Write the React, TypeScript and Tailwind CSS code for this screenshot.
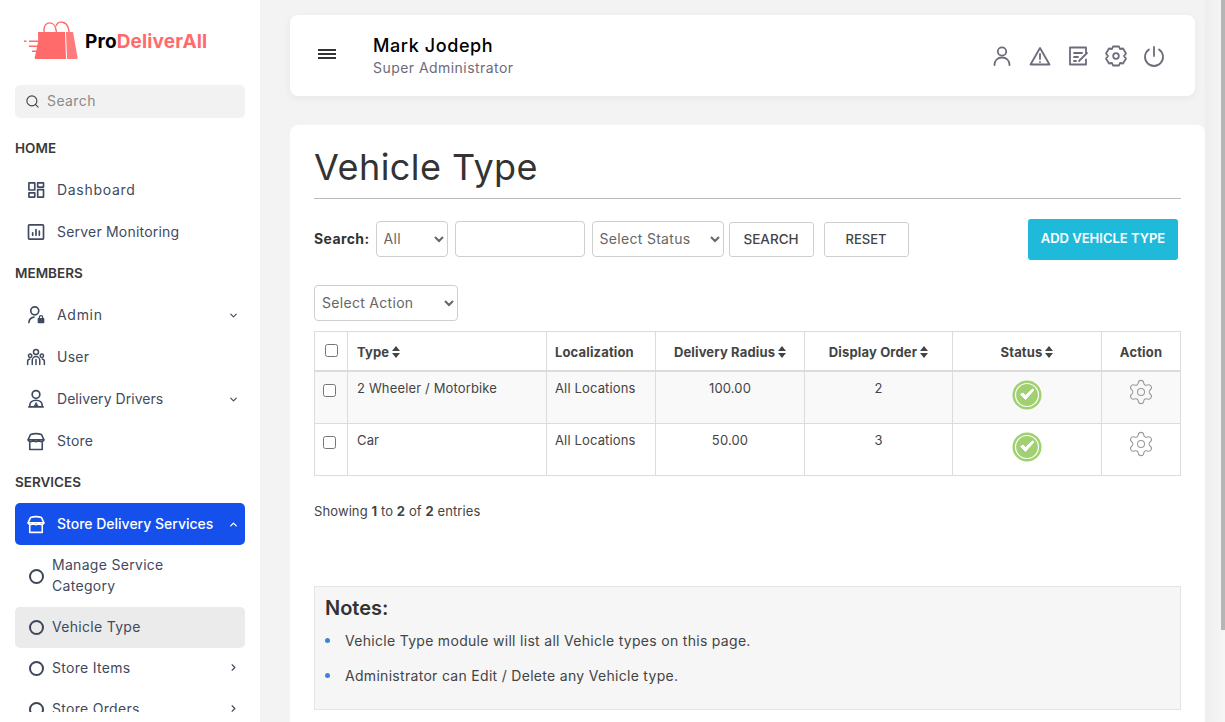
import React from "react";
import { Search, ChevronDown, ChevronUp, ChevronRight, Settings } from "lucide-react";

const Ic = ({ children, size = 20, sw = 1.6, cls = "" }: { children: React.ReactNode; size?: number; sw?: number; cls?: string }) => (
  <svg width={size} height={size} viewBox="0 0 24 24" fill="none" stroke="currentColor" strokeWidth={sw} strokeLinecap="round" strokeLinejoin="round" className={cls}>{children}</svg>
);

const DashIcon = () => (
  <Ic sw={2}><rect x="3.500" y="3.500" width="7" height="8.500" /><rect x="14" y="3.500" width="7" height="5" /><rect x="3.500" y="15.500" width="7" height="5" /><rect x="14" y="11.500" width="7" height="9" /></Ic>
);
const MonitorIcon = () => (
  <Ic sw={2}><rect x="3" y="3.500" width="18" height="17" rx="1" /><path d="M8 16v-3M12 16V9M16 16v-5" /></Ic>
);
const AdminIcon = () => (
  <svg width="20" height="20" viewBox="0 0 24 24" fill="none" stroke="currentColor" strokeWidth="2" strokeLinecap="round">
    <circle cx="10.500" cy="7" r="4.800" />
    <path d="M3.500 21c.3-3.500 2.500-6 6-6.500" />
    <rect x="14" y="15.500" width="8" height="6.500" rx="1" fill="currentColor" stroke="none" />
    <path d="M16 16v-1.200a2 2 0 0 1 4 0V16" strokeWidth="1.500" />
  </svg>
);
const UserIcon = () => (
  <Ic sw={1.800}><circle cx="12" cy="6" r="3" /><circle cx="5" cy="10.500" r="2" /><circle cx="19" cy="10.500" r="2" /><path d="M7.500 21v-5a4.500 4.500 0 0 1 9 0v5M2 21v-3.500a3 3 0 0 1 2.500-3M22 21v-3.500a3 3 0 0 0-2.500-3M12 15v6" /></Ic>
);
const DriverIcon = () => (
  <svg width="20" height="20" viewBox="0 0 24 24" fill="none" stroke="currentColor" strokeWidth="2" strokeLinecap="round" strokeLinejoin="round">
    <circle cx="12" cy="6.500" r="4.600" />
    <path d="M4.500 20c0-4 3.300-6.500 7.500-6.500s7.500 2.500 7.500 6.500" />
    <path d="M3.500 21.500h17" />
    <path d="M12 16.500l-2 4h4z" fill="currentColor" strokeWidth="1" />
  </svg>
);
const StoreIcon = ({ size = 23 }: { size?: number }) => (
  <Ic size={size} sw={1.900}>
    <path d="M5.500 3.500c2-.7 4-1 6.500-1s4.500.3 6.500 1L21.500 10H2.500z" />
    <path d="M2.500 10c1.500 3 4.500 3 6.300.3 1.500 2.500 4.900 2.500 6.400 0 1.800 2.700 4.800 2.700 6.300-.3" />
    <path d="M4.500 13.500v8h15v-8" />
  </Ic>
);

const Radio = () => <span className="w-[15px] h-[15px] rounded-full border-2 border-[#3d4759] shrink-0" />;

const Section = ({ children }: { children: React.ReactNode }) => (
  <div className="h-[41px] flex items-center text-[13.500px] font-semibold text-[#3a3a3a]"><span>{children}</span></div>
);

const NavItem = ({ icon, label, chev, track = "tracking-[0.25px]" }: { icon: React.ReactNode; label: string; chev?: boolean; track?: string }) => (
  <div className={`h-[42px] flex items-center pl-[11px] pr-[6px] text-[14px] text-[#3f4a60] ${track}`}>
    <span className="w-[20px] h-[20px] flex items-center justify-center text-[#3f4a60]">{icon}</span>
    <span className="ml-[11px] flex-1 -mt-[2px]">{label}</span>
    {chev && <ChevronDown size={11} strokeWidth={2.500} className="text-[#3f4a60]" />}
  </div>
);

const SubItem = ({ label, chev }: { label: string; chev?: boolean }) => (
  <div className="h-[41px] flex items-center pl-[14px] pr-[6px] text-[14px] text-[#3f4a60] tracking-[0.3px]">
    <Radio />
    <span className="ml-[8px] flex-1 -mt-[2px]">{label}</span>
    {chev && <ChevronRight size={11} strokeWidth={2.500} className="-mt-[2px]" />}
  </div>
);

const Sidebar = () => (
  <aside className="w-[260px] shrink-0 bg-white h-[722px] px-[15px]">
    <div className="h-[85px] flex items-start pt-[21px] pl-[8px]">
      <svg width="56" height="40" viewBox="0 0 56 40" className="shrink-0">
        <path d="M21 11V9c0-9.500 11-9.500 12 0l.5 2M33 5c2-6 11-5 12.500 3l.7 3" fill="none" stroke="#ff6b6b" strokeWidth="1.400" />
        <path d="M15 11h27l1 27H13c-1 0-1.500-.7-1.300-1.500L13 31H9v-1.500h4.300L14 26H6v-1.500h8.300l.7-3.500H6v-1.500h9.200z" fill="#ff6b6b" />
        <path d="M43 11h7l4.500 25c.2 1-.5 2-1.500 2h-9z" fill="#ff7b7b" />
        <path d="M1 20.200h2.500" stroke="#ff6b6b" strokeWidth="1.500" />
      </svg>
      <span className="ml-[6px] mt-[10px] text-[19px] leading-[22px] font-bold text-black tracking-[0.15px]">Pro<span className="text-[#ff6b6b]">DeliverAll</span></span>
    </div>
    <div className="h-[33px] rounded-[5px] bg-[#f2f2f2] flex items-center pl-[10px] text-[14px] text-[#8a8a8a] tracking-[0.4px]">
      <Search size={15} strokeWidth={1.800} className="text-[#444]" />
      <span className="ml-[7px] -mt-[2px]">Search</span>
    </div>
    <div className="h-[594px] overflow-hidden">
      <div className="h-[10px]" />
      <Section>HOME</Section>
      <NavItem icon={<DashIcon />} label="Dashboard" track="tracking-[0.7px]" />
      <NavItem icon={<MonitorIcon />} label="Server Monitoring" track="tracking-[0.2px]" />
      <Section>MEMBERS</Section>
      <NavItem icon={<AdminIcon />} label="Admin" chev track="tracking-[0.7px]" />
      <NavItem icon={<UserIcon />} label="User" />
      <NavItem icon={<DriverIcon />} label="Delivery Drivers" chev track="tracking-[0.05px]" />
      <NavItem icon={<StoreIcon />} label="Store" />
      <Section>SERVICES</Section>
      <div className="h-[42px] rounded-[5px] bg-[#1650ec] text-white flex items-center pl-[11px] pr-[6px] text-[14px] font-medium">
        <span className="w-[20px] h-[20px] flex items-center justify-center"><StoreIcon /></span>
        <span className="ml-[11px] flex-1 -mt-[2px]">Store Delivery Services</span>
        <ChevronUp size={11} strokeWidth={3} />
      </div>
      <div className="h-[62px] flex items-center pl-[14px] text-[14px] leading-[21px] text-[#3f4a60] tracking-[0.3px]">
        <Radio />
        <span className="ml-[8px] -mt-[2px]">Manage Service<br />Category</span>
      </div>
      <div className="rounded-[5px] bg-[#ebebeb]"><SubItem label="Vehicle Type" /></div>
      <SubItem label="Store Items" chev />
      <SubItem label="Store Orders" chev />
    </div>
  </aside>
);

const selectCls = "h-[36px] border border-[#cfcfcf] rounded-[4px] bg-white text-[14px] text-[#666] tracking-[0.3px] pl-[3px] pb-[2px]";

const Sort = () => (
  <svg width="8" height="12" viewBox="0 0 8 12" className="inline-block ml-[3px] align-[-1px]" fill="#444"><path d="M4 0l4 5H0zM4 12L0 7h8z" /></svg>
);

const StatusIcon = () => (
  <svg width="30" height="30" viewBox="0 0 30 30" className="mx-auto">
    <circle cx="15" cy="15" r="14.500" fill="#a0d070" />
    <circle cx="15" cy="15" r="11.500" fill="none" stroke="#fff" strokeWidth="1.200" />
    <path d="M8.500 14.500l5 5 8.500-9.500-1.500-1-7 6.500-2.500-2.500z" fill="#fff" stroke="#fff" strokeWidth="1" strokeLinejoin="round" />
  </svg>
);

const th = "border border-[#dcdcdc] border-b-2 text-[13px] font-bold text-[#444] px-[8px] pt-[4px] align-middle tracking-[0.15px]";
const td = "border border-[#dcdcdc] text-[13px] text-[#444] px-[8px] pt-[7px] align-top tracking-[0.15px]";

const Row = ({ name, radius, order, shade }: { name: string; radius: string; order: string; shade?: boolean }) => (
  <tr className={shade ? "h-[53px] bg-[#f9f9f9]" : "h-[52px] bg-white"}>
    <td className="border border-[#dcdcdc] pl-[8px] pt-[12px] align-top"><input type="checkbox" className="block w-[13px] h-[13px]" /></td>
    <td className={`${td} pl-[9px]`}>{name}</td>
    <td className={td}>All Locations</td>
    <td className={`${td} text-center`}>{radius}</td>
    <td className={`${td} text-center`}>{order}</td>
    <td className="border border-[#dcdcdc] pt-[8px] align-top"><StatusIcon /></td>
    <td className="border border-[#dcdcdc] pt-[6px] align-top"><Settings size={28} strokeWidth={0.9} className="mx-auto text-[#999999]" /></td>
  </tr>
);

const HeaderIcons = () => (
  <div className="flex items-center gap-[14px] text-[#6e6b7b]">
    <Ic size={24} sw={1.800}><circle cx="12" cy="7.500" r="4.200" /><path d="M4.500 21c0-4.500 3-7.500 7.500-7.500s7.500 3 7.500 7.500" /></Ic>
    <Ic size={24} sw={1.800}><path d="M12 4L2.500 20.500h19z" /><path d="M12 10v5M12 17.800v.2" /></Ic>
    <Ic size={24} sw={1.800}><path d="M20 9V3.500H4v17h16v-5" /><path d="M8 9h8M8 13h4M8 17h2" /><path d="M13 17l8-8" /></Ic>
    <Ic size={24} sw={1.800}><path d="M9 3h6l1 2.500 3-.5 3 5-2 2.500 2 2.500-3 5-3-.5-1 2.500H9l-1-2.500-3 .5-3-5 2-2.500-2-2.500 3-5 3 .5z" transform="translate(0 -.5)" /><circle cx="12" cy="12" r="2.800" /></Ic>
    <Ic size={24} sw={1.800}><path d="M12 3v9" /><path d="M7 5.500a9 9 0 1 0 10 0" /></Ic>
  </div>
);

const Main = () => (
  <main className="flex-1 min-w-0 pl-[30px] pt-[15px] overflow-hidden">
    <header className="w-[905px] h-[81px] bg-white rounded-[8px] shadow-[0_2px_8px_rgba(0,0,0,0.05)] flex items-center pl-[28px] pr-[29px]">
      <div className="flex flex-col gap-[2px] w-[16px] -mt-[3px]">
        <span className="h-[2px] w-[18px] bg-[#333]" /><span className="h-[2px] w-[18px] bg-[#333]" /><span className="h-[2px] w-[18px] bg-[#333]" />
      </div>
      <div className="ml-[39px] flex-1">
        <div className="text-[18px] leading-[26px] font-medium text-[#000] tracking-[0.6px]">Mark Jodeph</div>
        <div className="text-[14px] leading-[20px] text-[#6e6b7b] tracking-[0.45px] -mt-[1px]">Super Administrator</div>
      </div>
      <HeaderIcons />
    </header>
    <section className="mt-[29px] w-[915px] h-[600px] bg-white rounded-t-[8px] px-[24px] pt-[21px]">
      <h1 className="text-[36px] leading-[42px] font-normal text-[#333] h-[53px] border-b border-[#bbb] w-[867px] tracking-[0.45px]">Vehicle Type</h1>
      <div className="mt-[19px] h-[42px] flex items-center w-[864px]">
        <label className="text-[14px] font-bold text-[#333] mr-[6px] tracking-[0.4px] -mt-[2px]">Search:</label>
        <select className={`${selectCls} w-[72px]`}><option>All</option></select>
        <input className="ml-[7px] w-[130px] h-[36px] border border-[#cfcfcf] rounded-[4px] bg-white" />
        <select className={`${selectCls} ml-[7px] w-[132px]`}><option>Select Status</option></select>
        <button className="ml-[5px] w-[85px] h-[35px] border border-[#cfcfcf] rounded-[3px] text-[13.500px] font-medium text-[#444] bg-white">SEARCH</button>
        <button className="ml-[10px] w-[85px] h-[35px] border border-[#cfcfcf] rounded-[3px] pt-[1px] text-[13px] font-medium text-[#444] bg-white">RESET</button>
        <button className="ml-auto w-[150px] h-[41px] rounded-[3px] bg-[#1fbad9] text-white text-[13px] font-semibold">ADD VEHICLE TYPE</button>
      </div>
      <div className="mt-[25px]">
        <select className={`${selectCls} w-[144px]`}><option>Select Action</option></select>
      </div>
      <table className="mt-[10px] w-[866px] table-fixed border-collapse">
        <colgroup>
          <col className="w-[33px]" /><col className="w-[199px]" /><col className="w-[109px]" /><col className="w-[149px]" /><col className="w-[148px]" /><col className="w-[149px]" /><col className="w-[79px]" />
        </colgroup>
        <thead>
          <tr className="h-[39px]">
            <th className={th}><input type="checkbox" className="block mx-auto w-[13px] h-[13px] -mt-[4px]" /></th>
            <th className={`${th} text-left pl-[9px]`}>Type<Sort /></th>
            <th className={`${th} text-left`}>Localization</th>
            <th className={th}>Delivery Radius<Sort /></th>
            <th className={th}>Display Order<Sort /></th>
            <th className={th}>Status<Sort /></th>
            <th className={th}>Action</th>
          </tr>
        </thead>
        <tbody>
          <Row name="2 Wheeler / Motorbike" radius="100.00" order="2" shade />
          <Row name="Car" radius="50.00" order="3" />
        </tbody>
      </table>
      <div className="mt-[25px] text-[13px] leading-[20px] text-[#444] tracking-[0.1px]">Showing <b>1</b> to <b>2</b> of <b>2</b> entries</div>
      <div className="mt-[65px] w-[867px] h-[124px] bg-[#f6f6f6] border border-[#e5e5e5] pl-[10px] pt-[7px]">
        <div className="text-[20px] leading-[28px] font-semibold text-[#333]">Notes:</div>
        <ul className="mt-[1px]">
          <li className="flex items-center h-[35px] text-[14px] text-[#444] tracking-[0.3px]"><span className="w-[5px] h-[5px] rounded-full bg-[#3d85d0] mr-[15px]" />Vehicle Type module will list all Vehicle types on this page.</li>
          <li className="flex items-center h-[35px] text-[14px] text-[#444] tracking-[0.3px]"><span className="w-[5px] h-[5px] rounded-full bg-[#3d85d0] mr-[15px]" />Administrator can Edit / Delete any Vehicle type.</li>
        </ul>
      </div>
    </section>
  </main>
);

export default function App() {
  return (
    <div className="relative h-[722px] w-[1225px] overflow-hidden flex bg-[#f3f3f3] font-['Inter',sans-serif]">
      <Sidebar />
      <Main />
      <div className="absolute right-0 top-0 w-[20px] h-[722px] bg-gradient-to-r from-[#eeeeee] to-[#f6f6f6]">
        <div className="absolute right-0 top-0 w-[4px] h-[630px] bg-[#b5b5b5]" />
      </div>
    </div>
  );
}
